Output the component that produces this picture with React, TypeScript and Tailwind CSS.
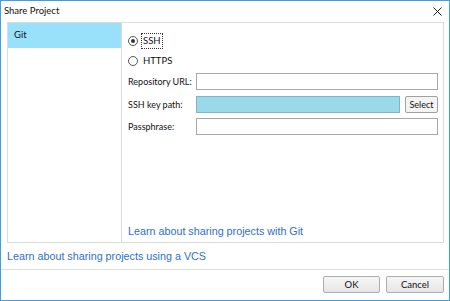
import React from 'react';

// Share Project dialog — Windows-style modal with a VCS list and Git settings

const Field: React.FC<{ label: string; children: React.ReactNode; className?: string }> = ({
  label,
  children,
  className = '',
}) => (
  <div className={`flex items-center h-[17px] ${className}`}>
    <span className="w-[68px] shrink-0 whitespace-nowrap text-[9px]">{label}</span>
    {children}
  </div>
);

const Radio: React.FC<{ checked?: boolean; label: string; focused?: boolean; className?: string }> = ({
  checked,
  label,
  focused,
  className = '',
}) => (
  <div className={`flex items-center h-[16px] ${className}`}>
    <span className="w-[10px] h-[10px] rounded-full border border-[#555] bg-white flex items-center justify-center">
      {checked && <span className="w-[4px] h-[4px] rounded-full bg-[#333]" />}
    </span>
    <span
      className={`ml-[3px] px-[1px] leading-[14px] border border-dotted ${
        focused ? 'border-[#333]' : 'border-transparent'
      }`}
    >
      {label}
    </span>
  </div>
);

export default function App() {
  return (
    <div
      className="w-[450px] h-[301px] bg-white border border-[#3f9ee4] flex flex-col text-[9.5px] text-[#111]"
      style={{ fontFamily: 'Lato, "Noto Sans", sans-serif' }}
    >
      {/* TITLE BAR */}
      <div className="h-[21px] flex items-center justify-between pl-[3px] pr-[7px] shrink-0">
        <span className="text-[9.5px]">Share Project</span>
        <svg width="9" height="9" viewBox="0 0 9 9" className="text-[#222]">
          <path d="M0.5 0.5 L8.5 8.5 M8.5 0.5 L0.5 8.5" stroke="currentColor" strokeWidth="1" />
        </svg>
      </div>

      {/* MAIN PANEL */}
      <div className="ml-[6px] mr-[5px] h-[221px] border border-[#dcdcdc] flex shrink-0">
        {/* sidebar */}
        <div className="w-[114px] border-r border-[#dcdcdc] shrink-0">
          <div className="h-[25px] bg-[#99e1fa] flex items-center pl-[6px]">Git</div>
        </div>

        {/* content */}
        <div className="flex-1 flex flex-col pl-[6px] pr-[5px]">
          <Radio checked focused label="SSH" className="mt-[10px]" />
          <Radio label="HTTPS" className="mt-[4px]" />

          <Field label="Repository URL:" className="mt-[4px]">
            <div className="flex-1 h-[17px] border border-[#a9a9a9] bg-white" />
          </Field>
          <Field label="SSH key path:" className="mt-[6px]">
            <div className="flex-1 h-[17px] border border-[#7fb5c8] bg-[#9ad9ea]" />
            <button className="ml-[5px] w-[33px] h-[17px] border border-[#a0a0a0] bg-[#f4f4f4] rounded-[2px] text-[9px] leading-none">
              Select
            </button>
          </Field>
          <Field label="Passphrase:" className="mt-[5px]">
            <div className="flex-1 h-[17px] border border-[#a9a9a9] bg-white" />
          </Field>

          <div className="flex-1" />
          <a
            className="mb-[5px] text-[#2f6fc7] text-[10.75px] leading-[12px]"
            style={{ fontFamily: '"Liberation Sans", Arial, sans-serif' }}
          >
            Learn about sharing projects with Git
          </a>
        </div>
      </div>

      {/* VCS LINK */}
      <div className="h-[26px] flex items-center pl-[6px] shrink-0">
        <a
          className="text-[#2f6fc7] text-[10.75px] leading-[12px]"
          style={{ fontFamily: '"Liberation Sans", Arial, sans-serif' }}
        >
          Learn about sharing projects using a VCS
        </a>
      </div>

      {/* FOOTER */}
      <div className="flex-1 border-t border-[#e0e0e0] flex items-start justify-end gap-[6px] pt-[6px] pr-[5px]">
        <button className="w-[57px] h-[17px] border border-[#adadad] rounded-[2px] bg-gradient-to-b from-[#f6f6f6] to-[#e6e6e6] text-[9.5px] leading-none">
          OK
        </button>
        <button className="w-[58px] h-[17px] border border-[#adadad] rounded-[2px] bg-gradient-to-b from-[#f6f6f6] to-[#e6e6e6] text-[9.5px] leading-none">
          Cancel
        </button>
      </div>
    </div>
  );
}
